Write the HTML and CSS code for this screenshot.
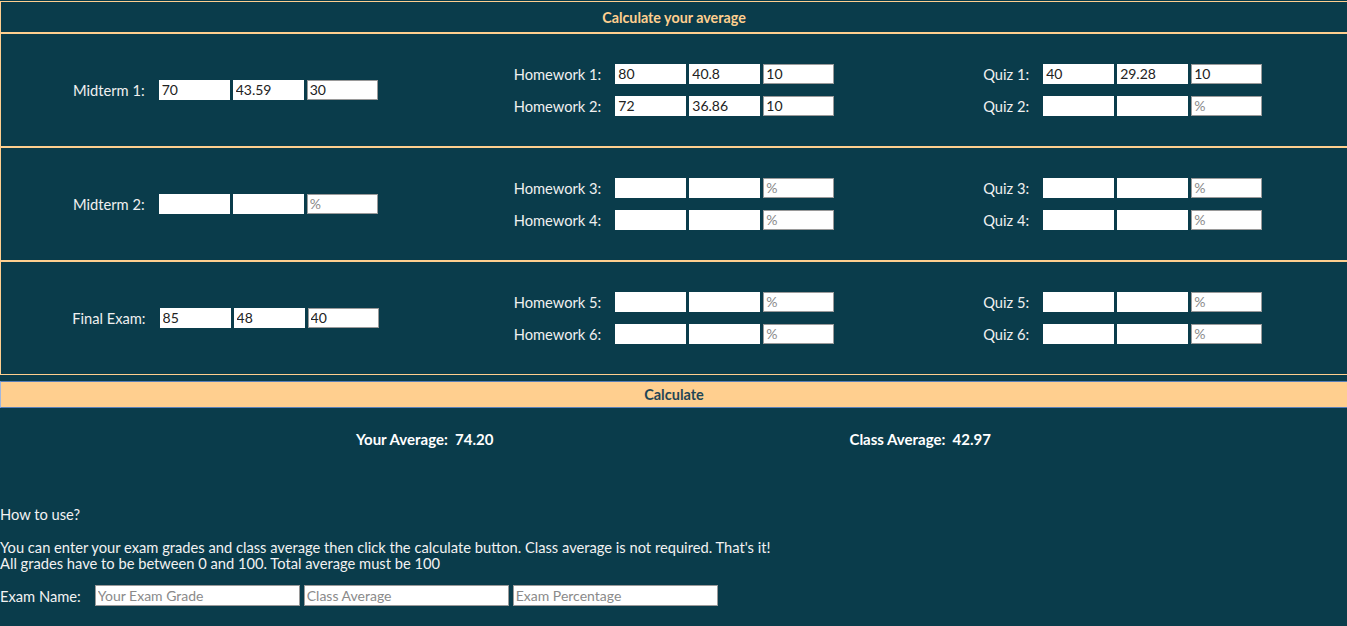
FILE: index.html
```html
<!DOCTYPE html>
<html>
<head>
<meta charset="utf-8">
<link rel="stylesheet" href="styles.css">
</head>
<body>
<div class="calc">
  <div class="title">Calculate your average</div>

  <div class="section">
    <div class="col">
      <div class="row"><span class="lbl">Midterm 1:</span><input class="fld" value="70"><input class="fld" value="43.59"><input class="fld pct" value="30" placeholder="%"></div>
    </div>
    <div class="col">
      <div class="row"><span class="lbl">Homework 1:</span><input class="fld" value="80"><input class="fld" value="40.8"><input class="fld pct" value="10" placeholder="%"></div>
      <div class="row"><span class="lbl">Homework 2:</span><input class="fld" value="72"><input class="fld" value="36.86"><input class="fld pct" value="10" placeholder="%"></div>
    </div>
    <div class="col">
      <div class="row"><span class="lbl">Quiz 1:</span><input class="fld" value="40"><input class="fld" value="29.28"><input class="fld pct" value="10" placeholder="%"></div>
      <div class="row"><span class="lbl">Quiz 2:</span><input class="fld"><input class="fld"><input class="fld pct" placeholder="%"></div>
    </div>
  </div>

  <div class="section">
    <div class="col">
      <div class="row"><span class="lbl">Midterm 2:</span><input class="fld"><input class="fld"><input class="fld pct" placeholder="%"></div>
    </div>
    <div class="col">
      <div class="row"><span class="lbl">Homework 3:</span><input class="fld"><input class="fld"><input class="fld pct" placeholder="%"></div>
      <div class="row"><span class="lbl">Homework 4:</span><input class="fld"><input class="fld"><input class="fld pct" placeholder="%"></div>
    </div>
    <div class="col">
      <div class="row"><span class="lbl">Quiz 3:</span><input class="fld"><input class="fld"><input class="fld pct" placeholder="%"></div>
      <div class="row"><span class="lbl">Quiz 4:</span><input class="fld"><input class="fld"><input class="fld pct" placeholder="%"></div>
    </div>
  </div>

  <div class="section">
    <div class="col">
      <div class="row"><span class="lbl">Final Exam:</span><input class="fld" value="85"><input class="fld" value="48"><input class="fld pct" value="40" placeholder="%"></div>
    </div>
    <div class="col">
      <div class="row"><span class="lbl">Homework 5:</span><input class="fld"><input class="fld"><input class="fld pct" placeholder="%"></div>
      <div class="row"><span class="lbl">Homework 6:</span><input class="fld"><input class="fld"><input class="fld pct" placeholder="%"></div>
    </div>
    <div class="col">
      <div class="row"><span class="lbl">Quiz 5:</span><input class="fld"><input class="fld"><input class="fld pct" placeholder="%"></div>
      <div class="row"><span class="lbl">Quiz 6:</span><input class="fld"><input class="fld"><input class="fld pct" placeholder="%"></div>
    </div>
  </div>
</div>

<button class="calc-btn">Calculate</button>

<div class="results">
  <div class="res">Your Average:&nbsp; 74.20</div>
  <div class="res">Class Average:&nbsp; 42.97</div>
</div>

<div class="howto">
  <p class="p1">How to use?</p>
  <p class="p2">You can enter your exam grades and class average then click the calculate button. Class average is not required. That's it!<br>All grades have to be between 0 and 100. Total average must be 100</p>
  <div class="example"><span class="ex-lbl">Exam Name:</span><input class="ex-fld" placeholder="Your Exam Grade"><input class="ex-fld" placeholder="Class Average"><input class="ex-fld" placeholder="Exam Percentage"></div>
</div>
</body>
</html>
```
FILE: styles.css
```css
html, body {
  margin: 0;
  padding: 0;
  background: #0a3c4b;
  overflow: hidden;
}
body {
  font-family: Lato, "Open Sans", sans-serif;
  color: #f2f2f2;
  font-size: 14.7px;
}
.calc {
  width: calc(100% + 1px);
  padding-top: 1px;
}
.title {
  box-sizing: border-box;
  height: 32px;
  border: 1px solid #ffcf8f;
  color: #ffcf8f;
  font-weight: bold;
  font-size: 14.3px;
  display: flex;
  align-items: center;
  justify-content: center;
}
.section {
  box-sizing: border-box;
  height: 114px;
  border: 1px solid #ffcf8f;
  display: grid;
  grid-template-columns: 1fr 1fr 1fr;
}
.col {
  display: flex;
  flex-direction: column;
  justify-content: center;
  align-items: center;
  gap: 12px;
  padding-bottom: 1px;
}
.row {
  display: flex;
  align-items: center;
}
.lbl {
  margin-right: 14px;
  font-size: 14.7px;
  color: #f0f0f0;
}
.fld {
  box-sizing: border-box;
  width: 71px;
  height: 20px;
  margin: 0 0 0 3px;
  padding: 0 2px;
  border: 1px solid #fff;
  background: #fff;
  font-family: Lato, "Open Sans", sans-serif;
  font-size: 14px;
  color: #222;
  outline: none;
}
.lbl + .fld { margin-left: 0; }
.fld.pct {
  border: 1px solid #9a9a9a;
}
.fld::placeholder, .ex-fld::placeholder {
  color: #8a8a8a;
}
.calc-btn {
  display: block;
  box-sizing: border-box;
  width: calc(100% + 1px);
  height: 27px;
  margin: 6px 0 0 0;
  background: #ffcf8f;
  border: 1px solid #5a7fb8;
  border-left-color: #9fb6e0;
  color: #1f4656;
  font-family: Lato, "Open Sans", sans-serif;
  font-size: 14.5px;
  font-weight: bold;
  padding: 0;
}
.results {
  display: flex;
  justify-content: space-evenly;
  margin-top: 23px;
  line-height: 17px;
}
.res {
  font-weight: bold;
  font-size: 15px;
  color: #fff;
}
.howto {
  margin-top: 58px;
  font-size: 14.7px;
  line-height: 16px;
}
.howto p { margin: 0; }
.p2 { margin-top: 17px !important; }
.example {
  margin-top: 14px;
  display: flex;
  align-items: center;
}
.ex-lbl { margin-right: 14px; }
.ex-fld {
  box-sizing: border-box;
  width: 205px;
  height: 21px;
  margin-right: 4px;
  border: 1px solid #9a9a9a;
  background: #fff;
  padding: 0 2px;
  font-family: Lato, "Open Sans", sans-serif;
  font-size: 14px;
  outline: none;
}
```
